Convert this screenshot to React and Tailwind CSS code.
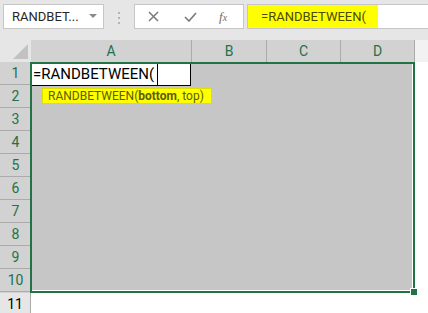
import React from 'react';

const font = { fontFamily: 'Roboto, "Liberation Sans", sans-serif' };

const cols = [
  { label: 'A', w: 'w-[161px]' },
  { label: 'B', w: 'w-[75px]' },
  { label: 'C', w: 'w-[74px]' },
  { label: 'D', w: 'w-[74px]' },
];

const TopBar = () => (
  <div className="flex h-[40px] items-start bg-[#e6e6e6] pt-[4px]">
    {/* name box */}
    <div className="ml-[3px] flex h-[25px] w-[101px] items-center justify-between border border-[#c6c6c6] bg-white pl-[8px] pr-[6px]">
      <span className="text-[13px] text-[#262626]">RANDBET...</span>
      <svg width="8" height="5" viewBox="0 0 8 5">
        <path d="M0 0 L8 0 L4 4 Z" fill="#8a8a8a" />
      </svg>
    </div>
    {/* dots */}
    <div className="ml-[14px] mt-[8px] flex flex-col gap-[3px]">
      <span className="block h-[2px] w-[2px] bg-[#b4b4b4]" />
      <span className="block h-[2px] w-[2px] bg-[#b4b4b4]" />
      <span className="block h-[2px] w-[2px] bg-[#b4b4b4]" />
    </div>
    {/* formula buttons */}
    <div className="ml-[14px] flex h-[25px] w-[110px] items-center border border-[#c6c6c6] bg-white">
      <svg className="ml-[13px]" width="11" height="11" viewBox="0 0 11 11">
        <path d="M1 1 L10 10 M10 1 L1 10" stroke="#7a7a7a" strokeWidth="1.5" />
      </svg>
      <svg className="ml-[25px]" width="13" height="10" viewBox="0 0 13 10">
        <path d="M1 5 L5 9 L12 1" stroke="#7a7a7a" strokeWidth="1.6" fill="none" />
      </svg>
      <span
        className="ml-[22px] text-[13px] italic text-[#6e6e6e]"
        style={{ fontFamily: '"Liberation Serif", serif' }}
      >
        f<span className="text-[10px]">x</span>
      </span>
    </div>
    {/* formula input */}
    <div className="ml-[3px] flex h-[25px] flex-1 items-stretch border-y border-l border-[#c6c6c6] bg-white">
      <div className="flex w-[130px] items-center bg-[#ffff00] pl-[13px]">
        <span className="text-[13px] text-[#4a4a00]">=RANDBETWEEN(</span>
      </div>
    </div>
  </div>
);

const HeaderRow = () => (
  <div className="flex h-[22px] bg-[#e6e6e6]">
    <div className="flex w-[31px] items-end justify-end pb-[3px] pr-[3px]">
      <svg width="15" height="15" viewBox="0 0 15 15">
        <path d="M15 0 L15 15 L0 15 Z" fill="#c2c2c2" />
      </svg>
    </div>
    {cols.map((c) => (
      <div
        key={c.label}
        className={`${c.w} flex items-center justify-center border-r border-[#ababab] bg-[#d2d2d2] text-[14px] text-[#217346]`}
      >
        {c.label}
      </div>
    ))}
    <div className="flex-1 bg-[#f2f2f2]" />
  </div>
);

const App = () => (
  <div className="h-[313px] w-[428px] overflow-hidden bg-white" style={font}>
    <TopBar />
    <HeaderRow />
    <div className="flex">
      {/* selected row headers */}
      <div className="flex w-[31px] flex-col bg-[#d2d2d2]">
        {[1, 2, 3, 4, 5, 6, 7, 8, 9, 10].map((n) => (
          <div
            key={n}
            className="flex h-[23px] items-center justify-center border-b border-[#ababab] text-[14px] text-[#217346]"
          >
            {n}
          </div>
        ))}
      </div>
      {/* selection */}
      <div className="relative -ml-[1px] h-[231px] w-[385px] border-2 border-[#217346] bg-[#c6c6c6]">
        <div className="h-full w-full border-b border-r border-white">
          <div className="flex h-[22px] w-[159px] items-center border-b border-r border-black bg-white pl-[1px]">
            <span className="text-[15px] leading-none text-black">=RANDBETWEEN(</span>
            <span className="ml-[3px] block h-[21px] w-[1px] self-start bg-black" />
          </div>
          <div className="ml-[10px] mt-[2px] flex h-[16px] w-[170px] items-center border border-[#e0e000] bg-[#ffff00] pl-[5px] text-[12px] text-[#5c5c00]">
            RANDBETWEEN(<b className="font-bold">bottom</b>, top)
          </div>
        </div>
        <div className="absolute -bottom-[5px] -right-[5px] h-[8px] w-[8px] border border-white bg-[#217346]" />
      </div>
      <div className="flex-1" />
    </div>
    <div className="flex">
      <div className="flex h-[22px] w-[31px] items-center justify-center border-r border-[#ababab] bg-[#e6e6e6] text-[14px] text-black">
        11
      </div>
    </div>
  </div>
);

export default App;
